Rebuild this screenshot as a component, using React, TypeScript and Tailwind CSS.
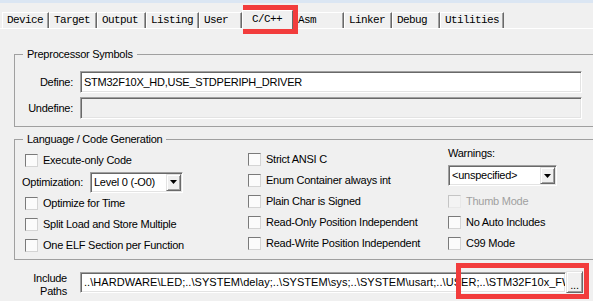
import React from 'react';

const tabs = [
  { label: 'Device', w: 'w-[47px]' },
  { label: 'Target', w: 'w-[48px]' },
  { label: 'Output', w: 'w-[49px]' },
  { label: 'Listing', w: 'w-[53px]' },
  { label: 'User', w: 'w-[43px]' },
  { label: 'C/C++', w: 'w-[51px]', active: true },
  { label: 'Asm', w: 'w-[51px]' },
  { label: 'Linker', w: 'w-[48px]' },
  { label: 'Debug', w: 'w-[48px]' },
  { label: 'Utilities', w: 'w-[64px]' },
];

const sunken =
  'border border-t-[#a0a0a0] border-l-[#a0a0a0] border-b-white border-r-white shadow-[inset_1px_1px_0_#696969,inset_-1px_-1px_0_#e3e3e3]';
const raised =
  'border border-t-[#e3e3e3] border-l-[#e3e3e3] border-b-[#696969] border-r-[#696969] shadow-[inset_1px_1px_0_#ffffff,inset_-1px_-1px_0_#a0a0a0] bg-[#f0f0f0]';

const Check = ({ label, disabled }: { label: string; disabled?: boolean }) => (
  <div className="flex items-center h-[21px] whitespace-nowrap">
    <span
      className={
        disabled
          ? 'shrink-0 w-[13px] h-[13px] border border-t-[#c4c4c4] border-l-[#c4c4c4] border-r-[#e8e8e8] border-b-[#e8e8e8] bg-[#f3f3f3]'
          : 'shrink-0 w-[13px] h-[13px] border border-t-[#7a7a7a] border-l-[#7a7a7a] border-r-[#d4d4d4] border-b-[#d4d4d4] bg-[#fbfbfb]'
      }
    />
    <span className={disabled ? 'ml-[5px] text-[#a0a0a0]' : 'ml-[5px]'}>{label}</span>
  </div>
);

const Arrow = () => (
  <svg width="7" height="4" viewBox="0 0 7 4">
    <polygon points="0,0 7,0 3.5,4" fill="#000" />
  </svg>
);

const Select = ({ value, w }: { value: string; w: string }) => (
  <div className={`${w} h-[21px] ${sunken} bg-white flex items-center pl-[3px] pr-[1px]`}>
    <span className="flex-1 whitespace-nowrap overflow-hidden">{value}</span>
    <span className={`w-[15px] h-[17px] ${raised} flex items-center justify-center`}>
      <Arrow />
    </span>
  </div>
);

export default function App() {
  return (
    <div className="relative w-[593px] h-[301px] overflow-hidden bg-[#f0f0f0] text-black text-[11px] leading-[13px] tracking-[-0.25px] [font-family:'Liberation_Sans',Arial,sans-serif]">
      <div className="h-[3px] bg-[#dbe6f3]" />

      {/* tab strip */}
      <div className="h-[25px] flex items-end pl-[2px] [font-family:'Liberation_Mono',monospace] text-[11px] tracking-[-0.6px]">
        {tabs.map((t) =>
          t.active ? (
            <div
              key={t.label}
              className={`${t.w} relative z-10 h-[19px] -mb-px border-t border-l border-white border-r border-r-[#696969] bg-[#f0f0f0] pl-[9px] pt-[2px]`}
            >
              {t.label}
            </div>
          ) : (
            <div
              key={t.label}
              className={`${t.w} h-[16px] border-t border-l border-white border-r border-r-[#696969] shadow-[inset_-1px_0_0_#a0a0a0] flex items-center pl-[4px]`}
            >
              {t.label}
            </div>
          )
        )}
      </div>

      <div className="border-t border-white">
        {/* Preprocessor Symbols */}
        <fieldset className="ml-[14px] mt-[18px] w-[590px] border border-[#a0a0a0] pt-[10px] pb-[7px]">
          <legend className="ml-[8px] px-[4px] leading-[14px]">Preprocessor Symbols</legend>
          <div className="flex items-center h-[22px]">
            <span className="w-[58px] text-right">Define:</span>
            <div className={`ml-[7px] w-[502px] h-[22px] ${sunken} bg-white flex items-center pl-[3px] whitespace-nowrap`}>
              STM32F10X_HD,USE_STDPERIPH_DRIVER
            </div>
          </div>
          <div className="flex items-center h-[22px] mt-[4px]">
            <span className="w-[58px] text-right">Undefine:</span>
            <div className={`ml-[7px] w-[502px] h-[22px] ${sunken} bg-[#f0f0f0]`} />
          </div>
        </fieldset>

        {/* Language / Code Generation */}
        <fieldset className="ml-[14px] mt-[5px] w-[590px] border border-[#a0a0a0] pt-[4px] pb-[3px]">
          <legend className="ml-[8px] px-[4px] leading-[14px]">Language / Code Generation</legend>
          <div className="grid grid-cols-[223px_200px_1fr] pl-[10px]">
            <div className="flex flex-col">
              <Check label="Execute-only Code" />
              <div className="flex items-center h-[22px] -ml-[3px] whitespace-nowrap">
                <span className="w-[68px]">Optimization:</span>
                <Select value="Level 0 (-O0)" w="w-[93px]" />
              </div>
              <Check label="Optimize for Time" />
              <Check label="Split Load and Store Multiple" />
              <Check label="One ELF Section per Function" />
            </div>
            <div className="flex flex-col -mt-px">
              <Check label="Strict ANSI C" />
              <Check label="Enum Container always int" />
              <Check label="Plain Char is Signed" />
              <Check label="Read-Only Position Independent" />
              <Check label="Read-Write Position Independent" />
            </div>
            <div className="flex flex-col -mt-[4px]">
              <div className="h-[14px] flex items-center">Warnings:</div>
              <div className="mt-[5px]">
                <Select value="<unspecified>" w="w-[109px]" />
              </div>
              <div className="mt-[5px]">
                <Check label="Thumb Mode" disabled />
                <Check label="No Auto Includes" />
                <Check label="C99 Mode" />
              </div>
            </div>
          </div>
        </fieldset>

        {/* Include Paths */}
        <div className="flex items-start mt-[12px]">
          <div className="w-[67px] text-right leading-[13px]">
            Include
            <br />
            Paths
          </div>
          <div className={`ml-[13px] w-[486px] h-[21px] ${sunken} bg-white flex items-center pl-[3px] whitespace-nowrap overflow-hidden tracking-[0.05px]`}>
            ..\HARDWARE\LED;..\SYSTEM\delay;..\SYSTEM\sys;..\SYSTEM\usart;..\USER;..\STM32F10x_FWLib\inc
          </div>
          <div className={`w-[17px] h-[22px] -mt-px ${raised} flex items-end justify-center pb-[3px] leading-[8px]`}>
            ...
          </div>
        </div>
      </div>

      {/* annotation boxes */}
      <div className="absolute left-[243px] top-[5px] w-[55px] h-[29px] border-[5px] border-[#f23c3c]" />
      <div className="absolute left-[456px] top-[263px] w-[133px] h-[36px] border-[5px] border-[#f23c3c]" />
    </div>
  );
}
